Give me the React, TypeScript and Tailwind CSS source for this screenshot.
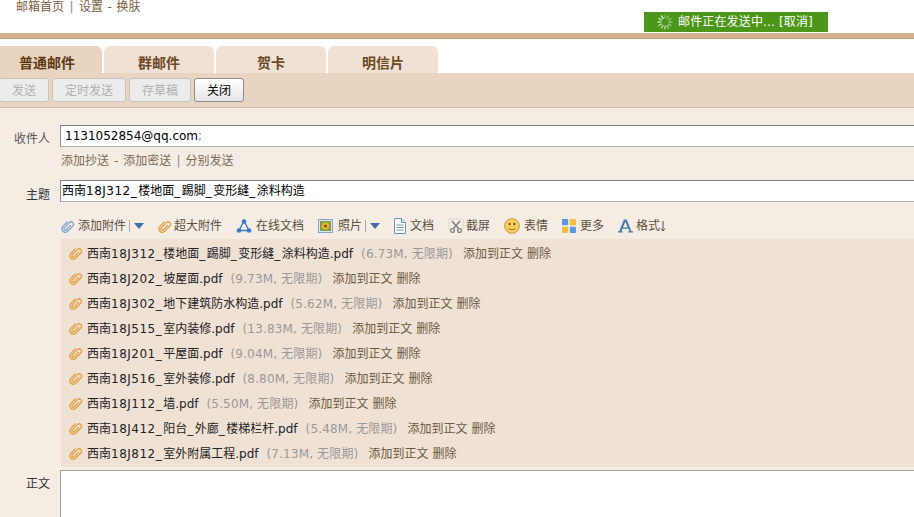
import type { ReactNode } from "react";

const files = [
  ["西南18J312_楼地面_踢脚_变形缝_涂料构造.pdf", "(6.73M, 无限期)"],
  ["西南18J202_坡屋面.pdf", "(9.73M, 无限期)"],
  ["西南18J302_地下建筑防水构造.pdf", "(5.62M, 无限期)"],
  ["西南18J515_室内装修.pdf", "(13.83M, 无限期)"],
  ["西南18J201_平屋面.pdf", "(9.04M, 无限期)"],
  ["西南18J516_室外装修.pdf", "(8.80M, 无限期)"],
  ["西南18J112_墙.pdf", "(5.50M, 无限期)"],
  ["西南18J412_阳台_外廊_楼梯栏杆.pdf", "(5.48M, 无限期)"],
  ["西南18J812_室外附属工程.pdf", "(7.13M, 无限期)"],
];

// codes and underscores run wider in the reference than in DejaVu
const FileName = ({ text }: { text: string }) => (
  <>
    {text.split(/(\d+J\d+|_)/).map((part, i) => {
      if (part === "_") return <span key={i} className="tracking-[1.5px]">{part}</span>;
      if (/^\d+J\d+$/.test(part)) return <span key={i} className="tracking-[0.5px]">{part}</span>;
      return <span key={i}>{part}</span>;
    })}
  </>
);

const Clip = ({ color = "#dfa040" }: { color?: string }) => (
  <svg width="15" height="15" viewBox="0 0 15 15" fill="none" className="shrink-0">
    <path
      d="M8.9 4.5v6.2a1.4 1.4 0 0 1-2.8 0V3.4a2.4 2.4 0 0 1 4.8 0v7.3a3.4 3.4 0 0 1-6.8 0V4.5"
      stroke={color}
      strokeWidth="1.3"
      strokeLinecap="round"
      transform="rotate(45 7.5 7.5)"
    />
  </svg>
);

const Caret = () => (
  <svg width="10" height="6" viewBox="0 0 10 6" className="shrink-0">
    <path d="M0 0h10L5 6z" fill="#3f6ea8" />
  </svg>
);

const Spinner = () => (
  <svg width="16" height="16" viewBox="0 0 16 16" className="shrink-0">
    {Array.from({ length: 12 }).map((_, i) => (
      <line
        key={i}
        x1="8"
        y1="0.5"
        x2="8"
        y2="4.5"
        stroke="#fff"
        strokeWidth="1.4"
        opacity={0.3 + (i / 12) * 0.6}
        transform={`rotate(${i * 30} 8 8)`}
      />
    ))}
  </svg>
);

const Tool = ({ icon, label, className }: { icon: ReactNode; label: ReactNode; className: string }) => (
  <span className={`flex items-center ${className}`}>
    {icon}
    <span className="flex items-center">{label}</span>
  </span>
);

const Btn = ({ label, width, active }: { label: string; width: string; active?: boolean }) => (
  <div
    className={`${width} h-6 flex items-center justify-center rounded-[3px] border pt-px text-xs ${
      active
        ? "border-[#8f8f8f] text-black bg-gradient-to-b from-white to-[#e6e6e6]"
        : "border-[#c8c4c0] text-[#b0b0b0] bg-[#ececec]"
    }`}
  >
    {label}
  </div>
);

export default function App() {
  return (
    <div
      className="relative h-[517px] w-[914px] overflow-hidden bg-white text-xs text-[#444]"
      style={{ fontFamily: '"DejaVu Sans", "Noto Sans CJK SC", sans-serif' }}
    >
      <div className="flex h-[33px] pl-4 pt-px text-xs leading-[13px] text-[#7a5c3c]">
        <span>邮箱首页</span>
        <span className="mx-[5.5px] text-[#8a8a8a]">|</span>
        <span>设置</span>
        <span className="mx-[4.5px]">-</span>
        <span>换肤</span>
      </div>

      <div className="absolute left-[644px] top-3 flex h-5 w-[184px] items-center gap-[5px] bg-[#4c9619] pl-[13px] text-xs tracking-[0.15px] text-white">
        <Spinner />
        <span>邮件正在发送中... [取消]</span>
      </div>

      <div className="h-[6px] border-b border-[#c99b6e] bg-[#d4b08f]" />

      <div className="flex h-[34px] items-end gap-0.5 bg-white">
        <div className="flex h-[27px] w-[102px] items-center justify-center rounded-tr-[6px] bg-[#e8d4c1] pr-2 pt-[6px] text-sm font-bold text-[#5c3a14]">
          普通邮件
        </div>
        {["群邮件", "贺卡", "明信片"].map((t) => (
          <div
            key={t}
            className="flex h-[27px] w-[110px] items-center justify-center rounded-t-[6px] bg-[#f0e1d4] pt-[6px] text-sm font-bold text-[#6b4a25]"
          >
            {t}
          </div>
        ))}
      </div>

      <div className="flex h-[34px] items-start gap-[3px] bg-[#e8d4c1] pt-[5px]">
        <Btn label="发送" width="w-[50px] -ml-px" />
        <Btn label="定时发送" width="w-[74px]" />
        <Btn label="存草稿" width="w-[62px]" />
        <Btn label="关闭" width="w-[50px]" active />
      </div>

      <div className="h-[410px] border-t border-[#d6bda6] bg-[#f5ece3]">
        <div className="flex h-[22px] pt-[17px] box-content">
          <div className="w-[50px] pt-[6px] text-right text-[#555]">收件人</div>
          <div className="ml-[10px] flex h-[22px] flex-1 items-center border border-r-0 border-[#b0b0b0] border-t-[#808080] border-l-[#909090] bg-white pl-1 text-xs text-black">
            1131052854@qq.com<span className="text-[#888]">;</span>
          </div>
        </div>

        <div className="ml-[61px] mt-[6px] flex h-4 items-center text-[#7a6a55]">
          <span>添加抄送</span>
          <span className="mx-[5px]">-</span>
          <span>添加密送</span>
          <span className="mx-[5px] text-[#8a8a8a]">|</span>
          <span>分别发送</span>
        </div>

        <div className="mt-[11px] flex h-[22px]">
          <div className="w-[50px] pt-[7px] text-right text-[#333]">主题</div>
          <div className="ml-[10px] flex h-[22px] flex-1 items-center border border-r-0 border-[#b0b0b0] border-t-[#808080] border-l-[#909090] bg-white pl-px text-xs text-black">
            <span>
              <FileName text="西南18J312_楼地面_踢脚_变形缝_涂料构造" />
            </span>
          </div>
        </div>

        <div className="relative ml-[60px] mt-[14px] flex h-5 items-center text-[#5c5040]">
          <Tool className="w-[69px] gap-[3px]" icon={<Clip color="#7aa6d4" />} label="添加附件" />
          <span className="mr-1 h-3 border-l border-[#a9a9a9]" />
          <Caret />
          <Tool className="ml-[13px] w-[65px] gap-0.5" icon={<Clip />} label="超大附件" />
          <Tool
            className="ml-[14px] w-[68px] gap-1"
            icon={
              <svg width="16" height="16" viewBox="0 0 16 16" fill="none" className="shrink-0">
                <path d="M8 3 3 12.5h10z" stroke="#3a78c8" strokeWidth="1.4" />
                <circle cx="8" cy="3.5" r="2.3" fill="#3a78c8" />
                <circle cx="3" cy="12.5" r="2.3" fill="#3a78c8" />
                <circle cx="13" cy="12.5" r="2.3" fill="#3a78c8" />
              </svg>
            }
            label="在线文档"
          />
          <Tool
            className="ml-[14px] w-[47px] gap-[5px]"
            icon={
              <svg width="15" height="14" viewBox="0 0 15 14" className="shrink-0">
                <rect x="0.5" y="0.5" width="14" height="13" fill="#dfe8f2" stroke="#8aa4c0" />
                <rect x="2" y="2" width="11" height="10" fill="#7f9f4c" />
                <circle cx="7.5" cy="7" r="3.6" fill="#f0b820" />
                <circle cx="7.5" cy="7" r="1.5" fill="#7a4a10" />
              </svg>
            }
            label="照片"
          />
          <span className="mr-1 h-3 border-l border-[#a9a9a9]" />
          <Caret />
          <Tool
            className="ml-[13px] w-[41px] gap-[3px]"
            icon={
              <svg width="14" height="16" viewBox="0 0 14 16" fill="none" className="shrink-0">
                <path d="M1.5.5h7l4 4v11h-11z" fill="#fff" stroke="#6f94c4" />
                <path d="M8.5.5v4h4" fill="#cfe0f2" stroke="#6f94c4" />
                <path d="M3.5 7h7M3.5 9.5h7M3.5 12h7" stroke="#6f94c4" />
              </svg>
            }
            label="文档"
          />
          <Tool
            className="ml-[14px] w-[42px] gap-0.5"
            icon={
              <svg width="16" height="16" viewBox="0 0 16 16" fill="none" className="shrink-0">
                <path d="M1 12V1h14v11" stroke="#cfcfcf" strokeDasharray="2 1" />
                <path d="M4 3 10.5 10.5M12 3 5.5 10.5" stroke="#808080" strokeWidth="1.6" />
                <circle cx="4.5" cy="12.5" r="1.9" stroke="#808080" strokeWidth="1.3" />
                <circle cx="11.5" cy="12.5" r="1.9" stroke="#808080" strokeWidth="1.3" />
              </svg>
            }
            label="截屏"
          />
          <Tool
            className="ml-[14px] w-[44px] gap-1"
            icon={
              <svg width="16" height="16" viewBox="0 0 17 17" className="shrink-0">
                <circle cx="8.5" cy="8.5" r="7.8" fill="#f7d060" stroke="#c89030" />
                <ellipse cx="6" cy="6.5" rx="1" ry="1.5" fill="#6a4a10" />
                <ellipse cx="11" cy="6.5" rx="1" ry="1.5" fill="#6a4a10" />
                <path d="M4.5 10.5c1.5 2.6 6.5 2.6 8 0" stroke="#a06a18" strokeWidth="1" fill="none" />
              </svg>
            }
            label="表情"
          />
          <Tool
            className="ml-[14px] w-[42px] gap-1"
            icon={
              <svg width="14" height="14" viewBox="0 0 14 14" className="shrink-0">
                <rect width="6.2" height="6.2" rx="0.8" fill="#5b9be0" />
                <rect x="7.8" width="6.2" height="6.2" rx="0.8" fill="#f2c040" />
                <rect y="7.8" width="6.2" height="6.2" rx="0.8" fill="#f2c040" />
                <rect x="7.8" y="7.8" width="6.2" height="6.2" rx="0.8" fill="#5b9be0" />
              </svg>
            }
            label="更多"
          />
          <Tool
            className="ml-[14px] gap-[3px]"
            icon={
              <svg width="15" height="14" viewBox="0 0 16 14" className="shrink-0">
                <path d="M6.3 0h3l5 12.5H16V14h-5v-1.5h1.3L11.3 10H4.7l-1 2.5H5V14H0v-1.5h1.3zM7.8 2.5 5.3 8.5h5z" fill="#4a78b0" />
              </svg>
            }
            label={
              <>
                格式
                <svg width="6" height="12" viewBox="0 0 6 12" fill="none" className="shrink-0">
                  <path d="M3 1v10M1 8.5 3 11l2-2.5" stroke="#5c5040" strokeWidth="1" />
                </svg>
              </>
            }
          />
        </div>

        <div className="ml-[61px] mt-[3px] bg-[#f0e1d5] pt-[2px] pb-px">
          {files.map(([name, size]) => (
            <div key={name} className="flex h-[25px] items-center pl-[7px] text-xs">
              <Clip />
              <span className="ml-1 text-[#222]">
                <FileName text={name} />
              </span>
              <span className="ml-2 tracking-[0.15px] text-[#999]">{size}</span>
              <span className="ml-2.5 text-[#6b5a40]">添加到正文</span>
              <span className="ml-1 text-[#6b5a40]">删除</span>
            </div>
          ))}
        </div>

        <div className="mt-[3px] flex">
          <div className="w-[50px] pt-[6px] text-right text-[#333]">正文</div>
          <div className="ml-[10px] h-[60px] flex-1 border border-r-0 border-[#b0b0b0] border-t-[#a0a0a0] border-l-[#a0a0a0] bg-white" />
        </div>
      </div>
    </div>
  );
}
